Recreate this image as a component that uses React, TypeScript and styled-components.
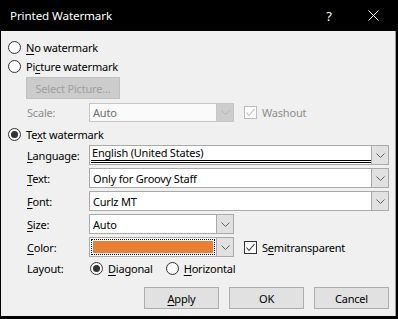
import React from "react";
import styled, { createGlobalStyle } from "styled-components";

const Global = createGlobalStyle`
  html, body { margin: 0; padding: 0; background: #000; }
  body {
    font-family: "Noto Sans", "Segoe UI", sans-serif;
    font-size: 11px;
    letter-spacing: -0.2px;
    color: #000;
  }
  u { text-decoration-thickness: 1px; text-underline-offset: 2px; }
`;

const Window = styled.div`
  width: 398px;
  height: 319px;
  box-sizing: border-box;
  background: #000;
  display: flex;
  flex-direction: column;
  padding: 0 2px 3px 1px;
`;

const TitleBar = styled.div`
  height: 31px;
  flex: none;
  display: flex;
  align-items: center;
  color: #fff;
  padding-left: 9px;
  padding-right: 17px;
`;

const Title = styled.div`
  flex: 1;
  font-size: 11.6px;
  letter-spacing: -0.1px;
`;

const Help = styled.div`
  width: 14px;
  margin-right: 32px;
  font-size: 13px;
  text-align: center;
`;

const Body = styled.div`
  flex: 1;
  background: #f0f0f0;
  border-right: 1px solid #9a9a9a;
  display: flex;
  flex-direction: column;
  padding: 0 6px 0 7px;
`;

const RadioRow = styled.label<{ $mt: number }>`
  display: flex;
  align-items: center;
  gap: 5px;
  height: 16px;
  margin-top: ${(p) => p.$mt}px;
  white-space: nowrap;
`;

const Circle = styled.span<{ $on?: boolean }>`
  width: 13px;
  height: 13px;
  box-sizing: border-box;
  border-radius: 50%;
  border: 1px solid #333;
  background: #fff;
  display: flex;
  align-items: center;
  justify-content: center;
  flex: none;
  &::after {
    content: "";
    width: 7px;
    height: 7px;
    border-radius: 50%;
    background: ${(p) => (p.$on ? "#333" : "transparent")};
  }
`;

const PlainButton = styled.div<{ $disabled?: boolean }>`
  width: 75px;
  height: 22px;
  box-sizing: border-box;
  background: ${(p) => (p.$disabled ? "#cccccc" : "#e1e1e1")};
  border: 1px solid ${(p) => (p.$disabled ? "#bfbfbf" : "#adadad")};
  color: ${(p) => (p.$disabled ? "#a0a0a0" : "#000")};
  display: flex;
  align-items: center;
  justify-content: center;
`;

const SelectButton = styled(PlainButton)`
  width: 94px;
  margin-top: 3px;
  margin-left: 18px;
`;

const Grid = styled.div<{ $mt: number; $gap?: number }>`
  display: grid;
  grid-template-columns: 63px 145px auto;
  justify-content: start;
  align-items: center;
  row-gap: ${(p) => p.$gap ?? 0}px;
  padding-left: 18px;
  margin-top: ${(p) => p.$mt}px;
`;

const Label = styled.span<{ $disabled?: boolean }>`
  color: ${(p) => (p.$disabled ? "#8d8d8d" : "#000")};
  white-space: nowrap;
  grid-column: 1;
  padding-left: 1px;
`;

const Combo = styled.div<{ $w: number; $h?: number; $disabled?: boolean }>`
  grid-column: 2;
  width: ${(p) => p.$w}px;
  height: ${(p) => p.$h ?? 20}px;
  box-sizing: border-box;
  display: flex;
  border: 1px solid ${(p) => (p.$disabled ? "#c6c6c6" : "#a9a9a9")};
  background: ${(p) => (p.$disabled ? "#fafafa" : "#fff")};
`;

const WideCombo = styled(Combo)`
  grid-column: 2 / span 2;
`;

const Field = styled.div<{ $disabled?: boolean }>`
  flex: 1;
  display: flex;
  align-items: center;
  padding-left: 3px;
  color: ${(p) => (p.$disabled ? "#6d6d6d" : "#000")};
  white-space: nowrap;
  overflow: hidden;
`;

const LangField = styled(Field)`
  padding-left: 1px;
  margin: 0 0 1px 1px;
  align-items: flex-start;
  line-height: 14px;
  border-bottom: 3px double #000;
`;

const Arrow = styled.div<{ $disabled?: boolean }>`
  width: 17px;
  flex: none;
  box-sizing: border-box;
  border-left: 1px solid ${(p) => (p.$disabled ? "#c6c6c6" : "#a9a9a9")};
  background: ${(p) => (p.$disabled ? "#cccccc" : "#e1e1e1")};
  display: flex;
  align-items: center;
  justify-content: center;
`;

const ColorField = styled.div`
  flex: 1;
  margin: 1px;
  border: 1px dotted #000;
  padding: 1px;
  display: flex;
`;

const Swatch = styled.div`
  flex: 1;
  background: #ed7d31;
`;

const Check = styled.label<{ $disabled?: boolean }>`
  display: flex;
  align-items: center;
  gap: 5px;
  margin-left: 10px;
  white-space: nowrap;
  color: ${(p) => (p.$disabled ? "#8d8d8d" : "#000")};
`;

const Box = styled.span<{ $disabled?: boolean }>`
  width: 13px;
  height: 13px;
  box-sizing: border-box;
  border: 1px solid ${(p) => (p.$disabled ? "#bcbcbc" : "#333")};
  background: #fff;
  display: flex;
  align-items: center;
  justify-content: center;
`;

const LayoutOptions = styled.div`
  grid-column: 2 / span 2;
  display: flex;
  align-items: center;
  gap: 13px;
  padding-left: 1px;
`;

const Buttons = styled.div`
  display: flex;
  justify-content: flex-end;
  gap: 10px;
  margin-top: 11px;
`;

const Chevron = ({ disabled }: { disabled?: boolean }) => (
  <svg width="9" height="5" viewBox="0 0 9 5">
    <path d="M0.5 0.5 L4.5 4.5 L8.5 0.5" fill="none" stroke={disabled ? "#b5b5b5" : "#606060"} strokeWidth="1" />
  </svg>
);

const Tick = ({ disabled }: { disabled?: boolean }) => (
  <svg width="11" height="11" viewBox="0 0 11 11">
    <path d="M1.5 5.5 L4 8.5 L9.5 2" fill="none" stroke={disabled ? "#bcbcbc" : "#333"} strokeWidth="1.1" />
  </svg>
);

const CloseIcon = () => (
  <svg width="11" height="11" viewBox="0 0 11 11">
    <path d="M0.5 0.5 L10.5 10.5 M10.5 0.5 L0.5 10.5" stroke="#fff" strokeWidth="1" />
  </svg>
);

export default function App() {
  return (
    <>
      <Global />
      <Window>
        <TitleBar>
          <Title>Printed Watermark</Title>
          <Help>?</Help>
          <CloseIcon />
        </TitleBar>
        <Body>
          <RadioRow $mt={8}>
            <Circle />
            <span><u>N</u>o watermark</span>
          </RadioRow>
          <RadioRow $mt={3}>
            <Circle />
            <span>Pi<u>c</u>ture watermark</span>
          </RadioRow>
          <SelectButton $disabled>Select Picture...</SelectButton>
          <Grid $mt={4}>
            <Label $disabled>Scale:</Label>
            <Combo $w={145} $h={19} $disabled>
              <Field $disabled>Auto</Field>
              <Arrow $disabled><Chevron disabled /></Arrow>
            </Combo>
            <Check $disabled>
              <Box $disabled><Tick disabled /></Box>
              Washout
            </Check>
          </Grid>
          <RadioRow $mt={4}>
            <Circle $on />
            <span>Te<u>x</u>t watermark</span>
          </RadioRow>
          <Grid $mt={3} $gap={3}>
            <Label><u>L</u>anguage:</Label>
            <WideCombo $w={300}>
              <LangField>English (United States)</LangField>
              <Arrow><Chevron /></Arrow>
            </WideCombo>
            <Label><u>T</u>ext:</Label>
            <WideCombo $w={300}>
              <Field>Only for Groovy Staff</Field>
              <Arrow><Chevron /></Arrow>
            </WideCombo>
            <Label><u>F</u>ont:</Label>
            <WideCombo $w={300}>
              <Field>Curlz MT</Field>
              <Arrow><Chevron /></Arrow>
            </WideCombo>
            <Label><u>S</u>ize:</Label>
            <Combo $w={145}>
              <Field>Auto</Field>
              <Arrow><Chevron /></Arrow>
            </Combo>
            <span />
            <Label><u>C</u>olor:</Label>
            <Combo $w={145}>
              <ColorField><Swatch /></ColorField>
              <Arrow><Chevron /></Arrow>
            </Combo>
            <Check>
              <Box><Tick /></Box>
              <span>S<u>e</u>mitransparent</span>
            </Check>
          </Grid>
          <Grid $mt={3}>
            <Label>Layout:</Label>
            <LayoutOptions>
              <RadioRow $mt={0}>
                <Circle $on />
                <span><u>D</u>iagonal</span>
              </RadioRow>
              <RadioRow $mt={0}>
                <Circle />
                <span><u>H</u>orizontal</span>
              </RadioRow>
            </LayoutOptions>
          </Grid>
          <Buttons>
            <PlainButton><span><u>A</u>pply</span></PlainButton>
            <PlainButton>OK</PlainButton>
            <PlainButton>Cancel</PlainButton>
          </Buttons>
        </Body>
      </Window>
    </>
  );
}
